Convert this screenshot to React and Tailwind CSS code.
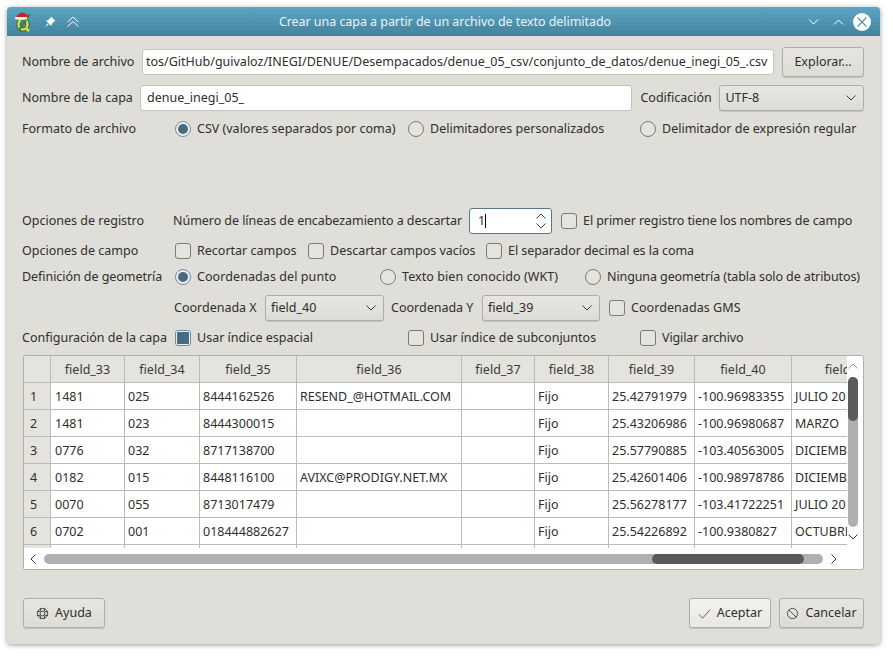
import React from 'react'

const columns = [
  { name: 'field_33', width: 'w-[74px]' },
  { name: 'field_34', width: 'w-[75px]' },
  { name: 'field_35', width: 'w-[97px]' },
  { name: 'field_36', width: 'w-[165px]' },
  { name: 'field_37', width: 'w-[73px]' },
  { name: 'field_38', width: 'w-[74px]' },
  { name: 'field_39', width: 'w-[86px]' },
  { name: 'field_40', width: 'w-[97px]' },
  { name: 'field_41', width: 'w-[112px]' },
]

const rows = [
  ['1481', '025', '8444162526', 'RESEND_@HOTMAIL.COM', '', 'Fijo', '25.42791979', '-100.96983355', 'JULIO 2014'],
  ['1481', '023', '8444300015', '', '', 'Fijo', '25.43206986', '-100.96980687', 'MARZO'],
  ['0776', '032', '8717138700', '', '', 'Fijo', '25.57790885', '-103.40563005', 'DICIEMBRE'],
  ['0182', '015', '8448116100', 'AVIXC@PRODIGY.NET.MX', '', 'Fijo', '25.42601406', '-100.98978786', 'DICIEMBRE'],
  ['0070', '055', '8713017479', '', '', 'Fijo', '25.56278177', '-103.41722251', 'JULIO 2014'],
  ['0702', '001', '018444882627', '', '', 'Fijo', '25.54226892', '-100.9380827', 'OCTUBRE'],
]

const Chevron = ({ up = false, className = 'w-[10px] h-[6px]', color = '#3a3a3a' }) => (
  <svg viewBox="0 0 10 6" className={className} fill="none" stroke={color} strokeWidth="1">
    <path d={up ? 'M0.5 5.5 L5 1 L9.5 5.5' : 'M0.5 0.5 L5 5 L9.5 0.5'} />
  </svg>
)

const Radio = ({ checked, label, className = '' }) => (
  <div className={`flex items-center gap-[6px] ${className}`}>
    <span className={`w-[16px] h-[16px] rounded-full border flex items-center justify-center shrink-0 ${checked ? 'border-[#6f8ea3] bg-[#eef0ee]' : 'border-[#7b7b78] bg-[#e4e3de]'}`}>
      {checked && <span className="w-[10px] h-[10px] rounded-full bg-[#4a6a80]" />}
    </span>
    <span className="whitespace-nowrap">{label}</span>
  </div>
)

const Check = ({ checked, label, className = '' }) => (
  <div className={`flex items-center gap-[6px] ${className}`}>
    <span className={`w-[16px] h-[16px] rounded-[3px] border flex items-center justify-center shrink-0 ${checked ? 'border-[#6f8ea3] bg-[#eef0ee]' : 'border-[#7b7b78] bg-[#e4e3de]'}`}>
      {checked && <span className="w-[12px] h-[12px] rounded-[1px] bg-[#4a6a80]" />}
    </span>
    <span className="whitespace-nowrap">{label}</span>
  </div>
)

const Combo = ({ value, className = '' }) => (
  <div className={`h-[26px] rounded-[3px] border border-[#aeada7] bg-gradient-to-b from-[#e7e6e1] to-[#dcdbd5] shadow-[0_1px_1px_#00000022] flex items-center justify-between pl-[5px] pr-[7px] ${className}`}>
    <span>{value}</span>
    <Chevron />
  </div>
)

const Button = ({ icon, label, className = '', light = false }) => (
  <div className={`h-[30px] rounded-[3px] border border-[#aeada7] bg-gradient-to-b ${light ? 'from-[#f3f2ef] to-[#e8e7e2]' : 'from-[#e7e6e1] to-[#dcdbd5]'} shadow-[0_1px_1px_#00000022] flex items-center justify-center gap-[6px] ${className}`}>
    {icon}
    <span>{label}</span>
  </div>
)

const QgisIcon = () => (
  <svg viewBox="0 0 18 21" className="w-[18px] h-[21px]">
    <ellipse cx="8" cy="13" rx="4.5" ry="5.5" fill="none" stroke="#3c4a22" strokeWidth="4" />
    <ellipse cx="8" cy="13" rx="4.5" ry="5.5" fill="none" stroke="#dcd84e" strokeWidth="2.6" />
    <path d="M10.5 17 L14 20" stroke="#dcd84e" strokeWidth="2.6" />
    <path d="M4 19 L15 3" stroke="#2f8a3a" strokeWidth="2.2" />
    <path d="M1 7 C2 2 9 -1 13 5 L11 7 Z" fill="#d0201c" />
    <rect x="0" y="6" width="12" height="2.6" rx="1.3" fill="#f6f6f6" />
  </svg>
)

const App = () => {
  return (
    <div className="w-[893px] h-[657px] bg-white p-[7px] pb-[13px] pr-[13px] font-['Noto_Sans',sans-serif] text-[12.5px] leading-[16px] text-[#2f2f2d]">
      <div className="w-[873px] h-[637px] rounded-[4px] bg-[#dfded8] shadow-[0_1px_5px_#00000066] overflow-hidden flex flex-col">
        {/* Title bar */}
        <div className="h-[29px] shrink-0 bg-gradient-to-b from-[#5aa6c5] to-[#44829c] flex items-center pl-[8px] pr-[9px] text-white">
          <div className="flex items-center gap-[11px] w-[190px]">
            <QgisIcon />
            <svg viewBox="0 0 12 12" className="w-[12px] h-[12px]" fill="#fff">
              <path d="M7 0.5 L11.5 5 L9.8 5.6 L7.6 8.6 L7.2 10 L2 4.8 L3.4 4.4 L6.4 2.2 Z" />
              <path d="M3.6 7.4 L0.6 11.4 L4.6 8.4 Z" />
            </svg>
            <svg viewBox="0 0 12 12" className="w-[12px] h-[12px]" fill="none" stroke="#fff" strokeWidth="1">
              <path d="M0.5 6 L6 1 L11.5 6 M0.5 10.5 L6 5.5 L11.5 10.5" />
            </svg>
          </div>
          <div className="flex-1 text-center pr-[123px] tracking-[-0.05px] text-[#e9f3f7]">Crear una capa a partir de un archivo de texto delimitado</div>
          <div className="flex items-center">
            <Chevron className="w-[11px] h-[6px]" color="#ffffff" />
            <div className="ml-[14px] mr-[9px]"><Chevron up className="w-[11px] h-[6px]" color="#ffffff" /></div>
            <span className="w-[18px] h-[18px] rounded-full bg-white flex items-center justify-center">
              <svg viewBox="0 0 10 10" className="w-[10px] h-[10px]" fill="none" stroke="#4f94b1" strokeWidth="1.2">
                <path d="M0.5 0.5 L9.5 9.5 M9.5 0.5 L0.5 9.5" />
              </svg>
            </span>
          </div>
        </div>

        {/* Form */}
        <div className="flex-1 flex flex-col pl-[15px] pr-[16px]">
          <div className="flex items-center h-[28px] mt-[12px]">
            <span className="w-[120px] shrink-0">Nombre de archivo</span>
            <div className="w-[632px] h-[26px] rounded-[3px] border border-[#c3c2bc] bg-white flex items-center pl-[3px] overflow-hidden whitespace-nowrap">
              tos/GitHub/guivaloz/INEGI/DENUE/Desempacados/denue_05_csv/conjunto_de_datos/denue_inegi_05_.csv
            </div>
            <Button label="Explorar..." className="w-[82px] h-[28px] ml-[8px]" />
          </div>

          <div className="flex items-center h-[26px] mt-[9px]">
            <span className="w-[118px] shrink-0">Nombre de la capa</span>
            <div className="w-[494px] h-[26px] rounded-[3px] border border-[#c3c2bc] bg-white flex items-center pl-[6px]">denue_inegi_05_</div>
            <span className="ml-[8px] w-[79px] shrink-0">Codificación</span>
            <Combo value="UTF-8" className="w-[145px]" />
          </div>

          <div className="flex items-center h-[16px] mt-[10px]">
            <span className="w-[153px] shrink-0">Formato de archivo</span>
            <Radio checked label="CSV (valores separados por coma)" className="w-[233px]" />
            <Radio label="Delimitadores personalizados" className="w-[232px]" />
            <Radio label="Delimitador de expresión regular" />
          </div>

          <div className="flex items-center h-[26px] mt-[71px]">
            <span className="w-[151px] shrink-0">Opciones de registro</span>
            <span className="w-[296px] shrink-0 tracking-[-0.05px]">Número de líneas de encabezamiento a descartar</span>
            <div className="w-[83px] h-[26px] rounded-[3px] border border-[#55788f] bg-white flex items-center justify-between pl-[8px] pr-[5px]">
              <span className="flex items-center">1<span className="w-px h-[14px] bg-black" /></span>
              <span className="flex flex-col gap-[4px]">
                <Chevron up />
                <Chevron />
              </span>
            </div>
            <Check label="El primer registro tiene los nombres de campo" className="ml-[9px] tracking-[-0.07px]" />
          </div>

          <div className="flex items-center h-[16px] mt-[9px]">
            <span className="w-[153px] shrink-0">Opciones de campo</span>
            <Check label="Recortar campos" className="w-[133px]" />
            <Check label="Descartar campos vacíos" className="w-[178px]" />
            <Check label="El separador decimal es la coma" className="tracking-[-0.06px]" />
          </div>

          <div className="flex items-center h-[16px] mt-[10px]">
            <span className="w-[153px] shrink-0 tracking-[-0.05px]">Definición de geometría</span>
            <Radio checked label="Coordenadas del punto" className="w-[205px] tracking-[0.08px]" />
            <Radio label="Texto bien conocido (WKT)" className="w-[205px] tracking-[0.08px]" />
            <Radio label="Ninguna geometría (tabla solo de atributos)" className="tracking-[-0.1px]" />
          </div>

          <div className="flex items-center h-[26px] mt-[10px] pl-[152px]">
            <span className="w-[91px] shrink-0">Coordenada X</span>
            <Combo value="field_40" className="w-[119px]" />
            <span className="ml-[7px] w-[91px] shrink-0">Coordenada Y</span>
            <Combo value="field_39" className="w-[118px]" />
            <Check label="Coordenadas GMS" className="ml-[9px] tracking-[0.06px]" />
          </div>

          <div className="flex items-center h-[16px] mt-[9px]">
            <span className="w-[153px] shrink-0">Configuración de la capa</span>
            <Check checked label="Usar índice espacial" className="w-[233px]" />
            <Check label="Usar índice de subconjuntos" className="w-[232px]" />
            <Check label="Vigilar archivo" className="tracking-[-0.1px]" />
          </div>

          {/* Preview table */}
          <div className="w-[841px] h-[215px] mt-[9px] ml-px rounded-[2px] border border-[#b1b0aa] bg-white flex flex-col overflow-hidden">
            <div className="flex h-[192px]">
              <div className="w-[823px] overflow-hidden">
                <div className="flex h-[27px] bg-[#e4e3dd] border-b border-[#bcbbb5]">
                  <div className="w-[27px] shrink-0 border-r border-[#bcbbb5]" />
                  {columns.map((col) => (
                    <div key={col.name} className={`${col.width} shrink-0 border-r border-[#bcbbb5] text-center leading-[27px] text-[#3a3a38]`}>
                      {col.name}
                    </div>
                  ))}
                </div>
                {rows.map((row, i) => (
                  <div key={i} className="flex h-[27px] border-b border-[#bcbbb5]">
                    <div className="w-[27px] shrink-0 bg-[#e4e3dd] border-r border-[#bcbbb5] pl-[6px] leading-[27px]">{i + 1}</div>
                    {row.map((cell, j) => (
                      <div key={j} className={`${columns[j].width} shrink-0 border-r border-[#bcbbb5] ${j === 0 ? 'pl-[4px]' : 'pl-[3px]'} leading-[27px] whitespace-nowrap overflow-hidden`}>
                        {cell}
                      </div>
                    ))}
                  </div>
                ))}
                <div className="flex h-[3px]">
                  <div className="w-[27px] shrink-0 bg-[#e4e3dd] border-r border-[#bcbbb5]" />
                  {columns.map((col) => (
                    <div key={col.name} className={`${col.width} shrink-0 border-r border-[#bcbbb5]`} />
                  ))}
                </div>
              </div>
              {/* Vertical scrollbar */}
              <div className="flex-1 flex flex-col items-center pt-[7px] pr-[5px]">
                <Chevron up color="#9a9a9a" />
                <div className="w-[10px] h-[150px] mt-[8px] rounded-[5px] bg-[#b0b0b0]">
                  <div className="w-[10px] h-[44px] rounded-[5px] bg-[#5a5a5a]" />
                </div>
                <div className="mt-[7px] leading-[0]"><Chevron /></div>
              </div>
            </div>
            {/* Horizontal scrollbar */}
            <div className="flex items-center h-[21px] pl-[6px] pr-[24px]">
              <svg viewBox="0 0 6 10" className="w-[6px] h-[10px]" fill="none" stroke="#3a3a3a"><path d="M5.5 0.5 L1 5 L5.5 9.5" /></svg>
              <div className="w-[779px] h-[10px] ml-[8px] rounded-[5px] bg-[#b0b0b0] flex justify-end pr-[19px]">
                <div className="w-[152px] h-[10px] rounded-[5px] bg-[#5a5a5a]" />
              </div>
              <svg viewBox="0 0 6 10" className="w-[6px] h-[10px] ml-[8px]" fill="none" stroke="#3a3a3a"><path d="M0.5 0.5 L5 5 L0.5 9.5" /></svg>
            </div>
          </div>

          {/* Buttons */}
          <div className="flex items-center mt-[28px] ml-px">
            <Button
              label="Ayuda"
              className="w-[82px]"
              icon={
                <svg viewBox="0 0 14 14" className="w-[13px] h-[13px]" fill="none" stroke="#3f3f3d" strokeWidth="1">
                  <circle cx="7" cy="7" r="5.5" />
                  <circle cx="7" cy="7" r="2.5" />
                  <path d="M5 1 V4.5 M9 1 V4.5 M5 9.5 V13 M9 9.5 V13 M1 5 H4.5 M1 9 H4.5 M9.5 5 H13 M9.5 9 H13" />
                </svg>
              }
            />
            <Button
              light
              label="Aceptar"
              className="w-[82px] ml-auto"
              icon={
                <svg viewBox="0 0 14 14" className="w-[13px] h-[13px]" fill="none" stroke="#555" strokeWidth="1">
                  <path d="M1 8 L5 12 L13 3" />
                </svg>
              }
            />
            <Button
              label="Cancelar"
              className="w-[85px] ml-[8px]"
              icon={
                <svg viewBox="0 0 14 14" className="w-[13px] h-[13px]" fill="none" stroke="#4a4a48" strokeWidth="1">
                  <circle cx="7" cy="7" r="5.5" />
                  <path d="M3 3 L11 11" />
                </svg>
              }
            />
          </div>
        </div>
      </div>
    </div>
  )
}

export default App
